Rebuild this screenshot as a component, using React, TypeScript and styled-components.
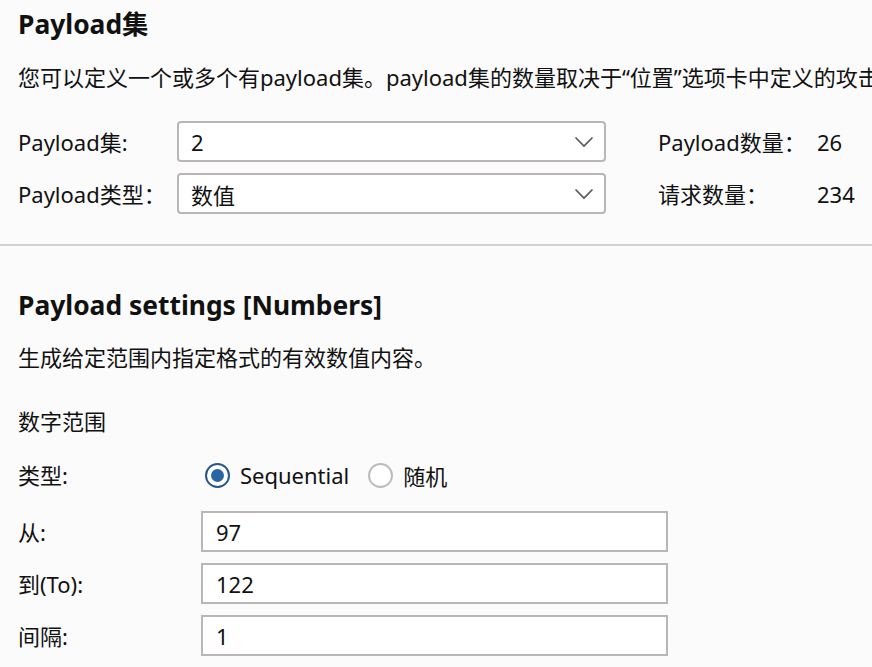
import React from "react";
import styled, { createGlobalStyle } from "styled-components";

const Global = createGlobalStyle`
  html, body { margin: 0; padding: 0; background: #fbfbfb; overflow: hidden; }
  body {
    font-family: "Noto Sans", "Noto Sans CJK SC", sans-serif;
    color: #111;
    font-size: 22px;
  }
`;

const Page = styled.div`
  width: 872px;
  height: 667px;
  overflow: hidden;
  white-space: nowrap;
`;

const Section = styled.section<{ $top: number; $bottom?: number }>`
  padding: ${(p) => p.$top}px 0 ${(p) => p.$bottom ?? 0}px 18px;
`;

const Title = styled.h2`
  margin: 0;
  font-size: 26.4px;
  font-weight: 700;
  line-height: 32px;
`;

const Desc = styled.p<{ $mt: number }>`
  margin: ${(p) => p.$mt}px 0 0;
  font-size: 22px;
  line-height: 28px;
`;

const SetGrid = styled.div`
  margin-top: 30px;
  display: grid;
  grid-template-columns: 159px 429px 159px auto;
  row-gap: 11px;
  align-items: center;
`;

const Label = styled.span<{ $mb?: number }>`
  font-size: 22px;
  line-height: 28px;
  margin-bottom: ${(p) => p.$mb ?? 0}px;
`;

const RightLabel = styled(Label)`
  margin-left: 52px;
`;

const Value = styled(Label)`
  margin-left: 52px;
`;

const Select = styled.div`
  box-sizing: border-box;
  height: 41px;
  border: 2px solid #bab6b6;
  border-radius: 4px;
  background: #fff;
  display: flex;
  align-items: center;
  justify-content: space-between;
  padding: 0 10px 0 12px;
  font-size: 22px;
`;

const Divider = styled.hr`
  margin: 0;
  border: none;
  height: 2px;
  background: #d2d2d2;
`;

const SubHead = styled.div`
  margin-top: 36px;
  font-size: 22px;
  line-height: 28px;
`;

const RangeGrid = styled.div`
  margin-top: 25px;
  display: grid;
  grid-template-columns: 183px 467px;
  row-gap: 11px;
  align-items: center;
`;

const RadioRow = styled.div`
  display: flex;
  align-items: center;
  height: 30px;
  margin-bottom: 10px;
  padding-left: 4px;
`;

const RadioOpt = styled.label`
  display: flex;
  align-items: center;
  gap: 10px;
  margin-right: 19px;
  font-size: 22px;
`;

const RadioCircle = styled.span<{ $checked?: boolean }>`
  box-sizing: border-box;
  width: 25px;
  height: 25px;
  border-radius: 50%;
  background: #fff;
  border: ${(p) => (p.$checked ? "2.5px solid #25558a" : "2px solid #bcbcbc")};
  display: flex;
  align-items: center;
  justify-content: center;
  &::after {
    content: "";
    display: ${(p) => (p.$checked ? "block" : "none")};
    width: 13px;
    height: 13px;
    border-radius: 50%;
    background: #2b64a3;
  }
`;

const Input = styled.div`
  box-sizing: border-box;
  height: 41px;
  border: 2px solid #bab6b6;
  background: #fff;
  display: flex;
  align-items: center;
  padding-left: 13px;
  font-size: 22px;
`;

const Chevron = () => (
  <svg width="20" height="12" viewBox="0 0 20 12" fill="none">
    <path d="M1.5 1.5 L10 10 L18.5 1.5" stroke="#555" strokeWidth="1.6" />
  </svg>
);

export default function App() {
  return (
    <Page>
      <Global />
      <Section $top={8} $bottom={30}>
        <Title>Payload集</Title>
        <Desc $mt={23}>
          您可以定义一个或多个有payload集。payload集的数量取决于“位置”选项卡中定义的攻击类型。
        </Desc>
        <SetGrid>
          <Label>Payload集:</Label>
          <Select>
            <span>2</span>
            <Chevron />
          </Select>
          <RightLabel>Payload数量：</RightLabel>
          <Value>26</Value>
          <Label>Payload类型：</Label>
          <Select>
            <span>数值</span>
            <Chevron />
          </Select>
          <RightLabel>请求数量：</RightLabel>
          <Value>234</Value>
        </SetGrid>
      </Section>
      <Divider />
      <Section $top={43}>
        <Title>Payload settings [Numbers]</Title>
        <Desc $mt={22}>生成给定范围内指定格式的有效数值内容。</Desc>
        <SubHead>数字范围</SubHead>
        <RangeGrid>
          <Label $mb={10}>类型:</Label>
          <RadioRow>
            <RadioOpt>
              <RadioCircle $checked />
              Sequential
            </RadioOpt>
            <RadioOpt>
              <RadioCircle />
              随机
            </RadioOpt>
          </RadioRow>
          <Label>从:</Label>
          <Input>97</Input>
          <Label>到(To):</Label>
          <Input>122</Input>
          <Label>间隔:</Label>
          <Input>1</Input>
        </RangeGrid>
      </Section>
    </Page>
  );
}
